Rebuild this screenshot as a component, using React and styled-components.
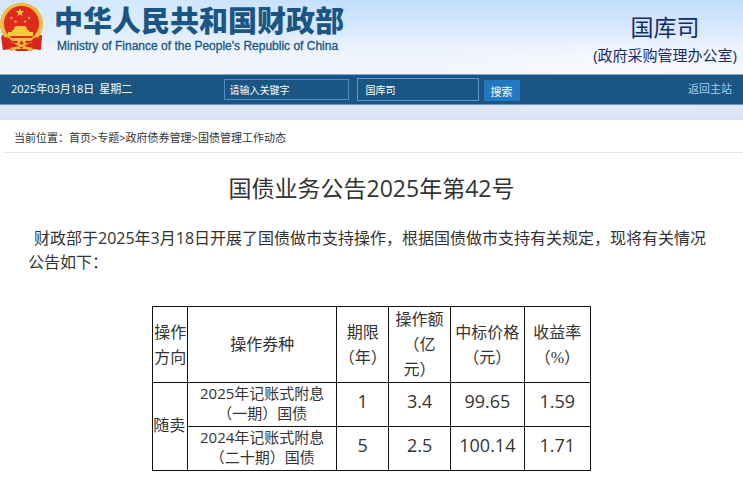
import React from "react";
import styled, { createGlobalStyle } from "styled-components";

const GlobalStyle = createGlobalStyle`
  * { box-sizing: border-box; }
  body {
    margin: 0;
    background: #fff;
    color: #333;
    font-family: "Open Sans", "Noto Sans CJK SC", sans-serif;
  }
  input, select, button { font: inherit; }
`;

const Banner = styled.div`
  display: flex;
  flex-direction: column;
  background:
    radial-gradient(ellipse 260px 60px at 12% 0, rgba(255, 255, 255, 0.35), transparent),
    radial-gradient(ellipse 180px 40px at 82% 60%, rgba(255, 255, 255, 0.5), transparent),
    linear-gradient(#c2defc 0, #d8e9fd 30px, #eef4fd 52px, #f3f5fc 72px, #dfe9f6 106px, #d7e2f3 120px);
  padding-bottom: 15px;
`;

const Masthead = styled.header`
  display: flex;
  justify-content: space-between;
  align-items: flex-start;
  height: 74px;
`;

const Brand = styled.div`
  display: flex;
  gap: 10px;
`;

const EmblemIcon = styled.svg`
  display: block;
  width: 44px;
  height: 52px;
`;

const BrandText = styled.div`
  padding-top: 6px;
  color: #1b5583;
  white-space: nowrap;
`;

const BrandName = styled.div`
  font-family: "Liberation Sans", "Noto Sans CJK SC", sans-serif;
  font-size: 29px;
  font-weight: 900;
  line-height: 32px;
`;

const BrandEnglish = styled.div`
  padding-left: 3px;
  font-family: "Liberation Sans", sans-serif;
  font-size: 12px;
  font-weight: 400;
  line-height: 16px;
  -webkit-text-stroke: 0.3px #1b5583;
`;

const Department = styled.div`
  padding: 11px 6px 0 0;
  color: #142c6c;
  text-align: center;
  font-size: 15px;
  line-height: 24px;
`;

const DepartmentName = styled.div`
  font-size: 23px;
  line-height: 32px;
`;

const Toolbar = styled.div`
  display: grid;
  grid-template-columns: 1fr auto 1fr;
  align-items: center;
  height: 31px;
  padding: 0 11px;
  background: #1b5583;
  border-top: 1px solid #7fa9cd;
  border-bottom: 1px solid #6f95b8;
  color: #fff;
  font-size: 11px;
`;

const DateText = styled.time`
  display: flex;
  gap: 5px;
  padding-bottom: 3px;
`;

const SearchForm = styled.form`
  display: flex;
  align-items: center;
  gap: 8px;
`;

const ScopeGroup = styled.div`
  display: flex;
  align-items: flex-end;
  gap: 5px;
`;

const Keyword = styled.input`
  width: 125px;
  height: 21px;
  margin: 0;
  padding: 0 5px;
  border: 1px solid #4d8ec4;
  border-radius: 0;
  background: transparent;
  color: #fff;
  font-size: 10px;
  &::placeholder { color: #fff; opacity: 1; }
`;

const Scope = styled.select`
  appearance: none;
  width: 122px;
  height: 23px;
  margin: 0;
  padding: 0 8px;
  border: 1px solid #5b9bd0;
  border-radius: 0;
  background: transparent;
  color: #fff;
  font-size: 10px;
`;

const SearchButton = styled.button`
  width: 36px;
  height: 21px;
  padding: 0;
  border: 0;
  background: #2379c0;
  color: #fff;
  font-size: 11px;
`;

const HomeLink = styled.a`
  justify-self: end;
  padding-bottom: 3px;
  color: #9fcdf2;
  text-decoration: none;
`;

const Breadcrumb = styled.nav`
  display: flex;
  height: 33px;
  align-items: center;
  margin: 0 0 0 4px;
  padding: 2px 0 0 10px;
  border-bottom: 1px solid #e6e6e6;
  font-size: 11px;
  a { color: inherit; text-decoration: none; }
`;

const Article = styled.article`
  padding-top: 19px;
`;

const Title = styled.h1`
  margin: 0;
  text-align: center;
  font-size: 23px;
  font-weight: 400;
  line-height: 32px;
`;

const Paragraph = styled.p`
  margin: 22px 28px 32px;
  text-indent: 6px;
  font-size: 16px;
  line-height: 24px;
`;

const BondTable = styled.table`
  width: 59%;
  margin: 0 auto;
  border-collapse: collapse;
  table-layout: fixed;
  text-align: center;
`;

const Col = styled.col`
  width: ${(p) => p.$share}%;
`;

const HeadCell = styled.th`
  height: 76px;
  padding: 0;
  border: 1px solid #111;
  font-family: "Liberation Serif", "Noto Sans CJK SC", serif;
  font-size: 16px;
  font-weight: 400;
  line-height: 25px;
  white-space: nowrap;
`;

const cellSizes = { side: 16, bond: 15, figure: 18 };

const Cell = styled.td`
  height: 44px;
  padding: 0 0 ${(p) => (p.$kind === "figure" ? 7 : 3)}px;
  border: 1px solid #111;
  font-size: ${(p) => cellSizes[p.$kind]}px;
  line-height: 20px;
  text-align: ${(p) => (p.$kind === "side" ? "left" : "center")};
  white-space: nowrap;
`;

const columns = [
  { share: 8, lines: ["操作", "方向"] },
  { share: 34, lines: ["操作券种"] },
  { share: 12, lines: ["期限", "（年）"] },
  { share: 14, lines: ["操作额", "（亿", "元）"] },
  { share: 17, lines: ["中标价格", "（元）"] },
  { share: 15, lines: ["收益率", "（%）"] },
];

const bonds = [
  { name: ["2025年记账式附息", "（一期）国债"], figures: ["1", "3.4", "99.65", "1.59"] },
  { name: ["2024年记账式附息", "（二十期）国债"], figures: ["5", "2.5", "100.14", "1.71"] },
];

function Lines({ items }) {
  return items.map((line, i) => (
    <React.Fragment key={line}>
      {i > 0 && <br />}
      {line}
    </React.Fragment>
  ));
}

function Star({ x, y, r }) {
  const points = Array.from({ length: 10 }, (_, i) => {
    const radius = i % 2 ? r * 0.4 : r;
    const angle = (Math.PI / 5) * i - Math.PI / 2;
    return `${x + radius * Math.cos(angle)},${y + radius * Math.sin(angle)}`;
  }).join(" ");
  return <polygon points={points} fill="#f8cf4c" />;
}

function Emblem() {
  return (
    <EmblemIcon viewBox="0 0 44 52" role="img" aria-label="国徽">
      <path d="M2 35 L3 50 L11 49 L17 51 H27 L33 49 L41 50 L42 35 Z" fill="#d8261c" />
      <circle cx="21.5" cy="24" r="21.5" fill="#efb63c" />
      <circle cx="21.5" cy="24" r="20" fill="none" stroke="#f7d266" strokeWidth="1" strokeDasharray="3 2" />
      <circle cx="21.5" cy="23.5" r="17.5" fill="#e02a1d" />
      <Star x={20} y={12.5} r={4.5} />
      <Star x={11.5} y={18} r={1.8} />
      <Star x={15.5} y={21.5} r={1.8} />
      <Star x={25} y={21.5} r={1.8} />
      <Star x={29} y={18} r={1.8} />
      <path d="M14 28 L16 26 H25 L27 28 V30 H29 V32 H33 V36 H8 V32 H12 V30 H14 Z" fill="#f8c840" />
      <path d="M5 37 Q21 43 38 37 L36 41 Q21 46 7 41 Z" fill="#d8261c" />
      <path d="M9 38 H34 L31 41 H12 Z" fill="#f3b936" />
      <circle cx="21.5" cy="43" r="4" fill="#f5c243" />
      <circle cx="21.5" cy="43" r="1.8" fill="#d8261c" />
      <path d="M1 36 Q6 42 16 44 L12 51 L8 48 L3 50 Z M42 36 Q37 42 27 44 L31 51 L35 48 L40 50 Z" fill="#d8261c" />
      <path d="M10 48 L19 46 L21.5 49 L24 46 L33 48 L31 51 L26 49 H17 L12 51 Z" fill="#f3bd3a" />
    </EmblemIcon>
  );
}

export default function App() {
  return (
    <>
      <GlobalStyle />
      <Banner>
        <Masthead>
          <Brand>
            <Emblem />
            <BrandText>
              <BrandName>中华人民共和国财政部</BrandName>
              <BrandEnglish>Ministry of Finance of the People's Republic of China</BrandEnglish>
            </BrandText>
          </Brand>
          <Department>
            <DepartmentName>国库司</DepartmentName>
            (政府采购管理办公室)
          </Department>
        </Masthead>
        <Toolbar>
          <DateText dateTime="2025-03-18">
            <span>2025年03月18日</span>
            <span>星期二</span>
          </DateText>
          <SearchForm role="search" onSubmit={(e) => e.preventDefault()}>
            <Keyword type="text" placeholder="请输入关键字" aria-label="请输入关键字" />
            <ScopeGroup>
              <Scope aria-label="国库司">
                <option>国库司</option>
              </Scope>
              <SearchButton type="submit">搜索</SearchButton>
            </ScopeGroup>
          </SearchForm>
          <HomeLink href="#home">返回主站</HomeLink>
        </Toolbar>
      </Banner>
      <Breadcrumb>
        当前位置：<a href="#index">首页</a>&gt;<a href="#topics">专题</a>&gt;
        <a href="#bonds">政府债券管理</a>&gt;<a href="#news">国债管理工作动态</a>
      </Breadcrumb>
      <Article>
        <Title>国债业务公告2025年第42号</Title>
        <Paragraph>
          财政部于2025年3月18日开展了国债做市支持操作，根据国债做市支持有关规定，现将有关情况公告如下：
        </Paragraph>
        <BondTable>
          <colgroup>
            {columns.map((c) => (
              <Col key={c.lines[0]} $share={c.share} />
            ))}
          </colgroup>
          <thead>
            <tr>
              {columns.map((c) => (
                <HeadCell key={c.lines[0]} scope="col">
                  <Lines items={c.lines} />
                </HeadCell>
              ))}
            </tr>
          </thead>
          <tbody>
            {bonds.map((bond, i) => (
              <tr key={bond.name[0]}>
                {i === 0 && (
                  <Cell rowSpan={2} $kind="side">
                    随卖
                  </Cell>
                )}
                <Cell $kind="bond">
                  <Lines items={bond.name} />
                </Cell>
                {bond.figures.map((f) => (
                  <Cell key={f} $kind="figure">
                    {f}
                  </Cell>
                ))}
              </tr>
            ))}
          </tbody>
        </BondTable>
      </Article>
    </>
  );
}
